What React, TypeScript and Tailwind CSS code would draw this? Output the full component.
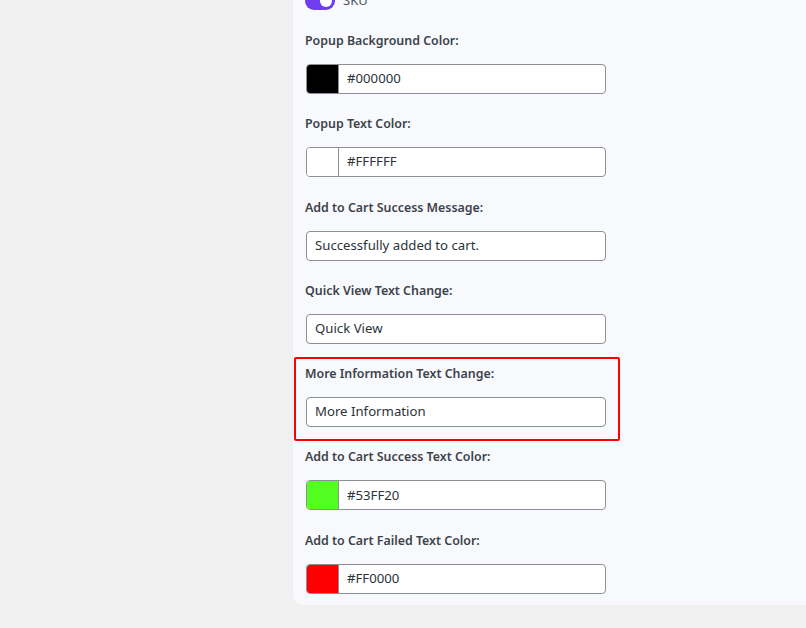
import React from "react";

type Field = {
  label: string;
  value: string;
  swatch?: string;
  highlight?: boolean;
};

const fields: Field[] = [
  { label: "Popup Background Color:", value: "#000000", swatch: "#000000" },
  { label: "Popup Text Color:", value: "#FFFFFF", swatch: "#ffffff" },
  { label: "Add to Cart Success Message:", value: "Successfully added to cart." },
  { label: "Quick View Text Change:", value: "Quick View" },
  { label: "More Information Text Change:", value: "More Information", highlight: true },
  { label: "Add to Cart Success Text Color:", value: "#53FF20", swatch: "#53ff20" },
  { label: "Add to Cart Failed Text Color:", value: "#FF0000", swatch: "#ff0000" },
];

function SettingField({ field }: { field: Field }) {
  return (
    <div className="relative flex flex-col">
      {field.highlight && (
        <div className="pointer-events-none absolute -left-[11px] -top-[8px] -bottom-[14px] w-[326px] border-2 border-[#ff0000] rounded-[2px]" />
      )}
      <label className="h-[18px] text-[12.4px] leading-[18px] font-semibold text-[#3c434a]">
        {field.label}
      </label>
      <div className="mt-[14px] ml-px flex h-[30px] w-[300px] overflow-hidden rounded-[4px] border border-[#8c8f94] bg-white">
        {field.swatch && (
          <div
            className="w-[32px] h-full border-r border-[#8c8f94]"
            style={{ backgroundColor: field.swatch }}
          />
        )}
        <div className="flex items-center px-2 text-[13.2px] text-[#2c3338]">
          {field.value}
        </div>
      </div>
    </div>
  );
}

export default function App() {
  return (
    <div
      className="w-[806px] h-[628px] overflow-hidden bg-[#f0f0f1] pl-[293px]"
      style={{ fontFamily: '"Noto Sans", "Open Sans", sans-serif' }}
    >
      <div className="h-[605px] bg-[#f8f9fd] rounded-bl-[10px] pl-3 overflow-hidden">
        {/* toggle row, cut off at the top */}
        <div className="-mt-[8px] flex items-center gap-2 h-[18px]">
          <div className="relative w-[30px] h-[18px] rounded-full bg-[#6f3cf0]">
            <div className="absolute right-[3px] top-[3px] w-[12px] h-[12px] rounded-full bg-white" />
          </div>
          <span className="text-[13px] text-[#50575e]">SKU</span>
        </div>
        <div className="mt-[22px] flex flex-col gap-[21.3px]">
          {fields.map((f) => (
            <SettingField key={f.label} field={f} />
          ))}
        </div>
      </div>
    </div>
  );
}
